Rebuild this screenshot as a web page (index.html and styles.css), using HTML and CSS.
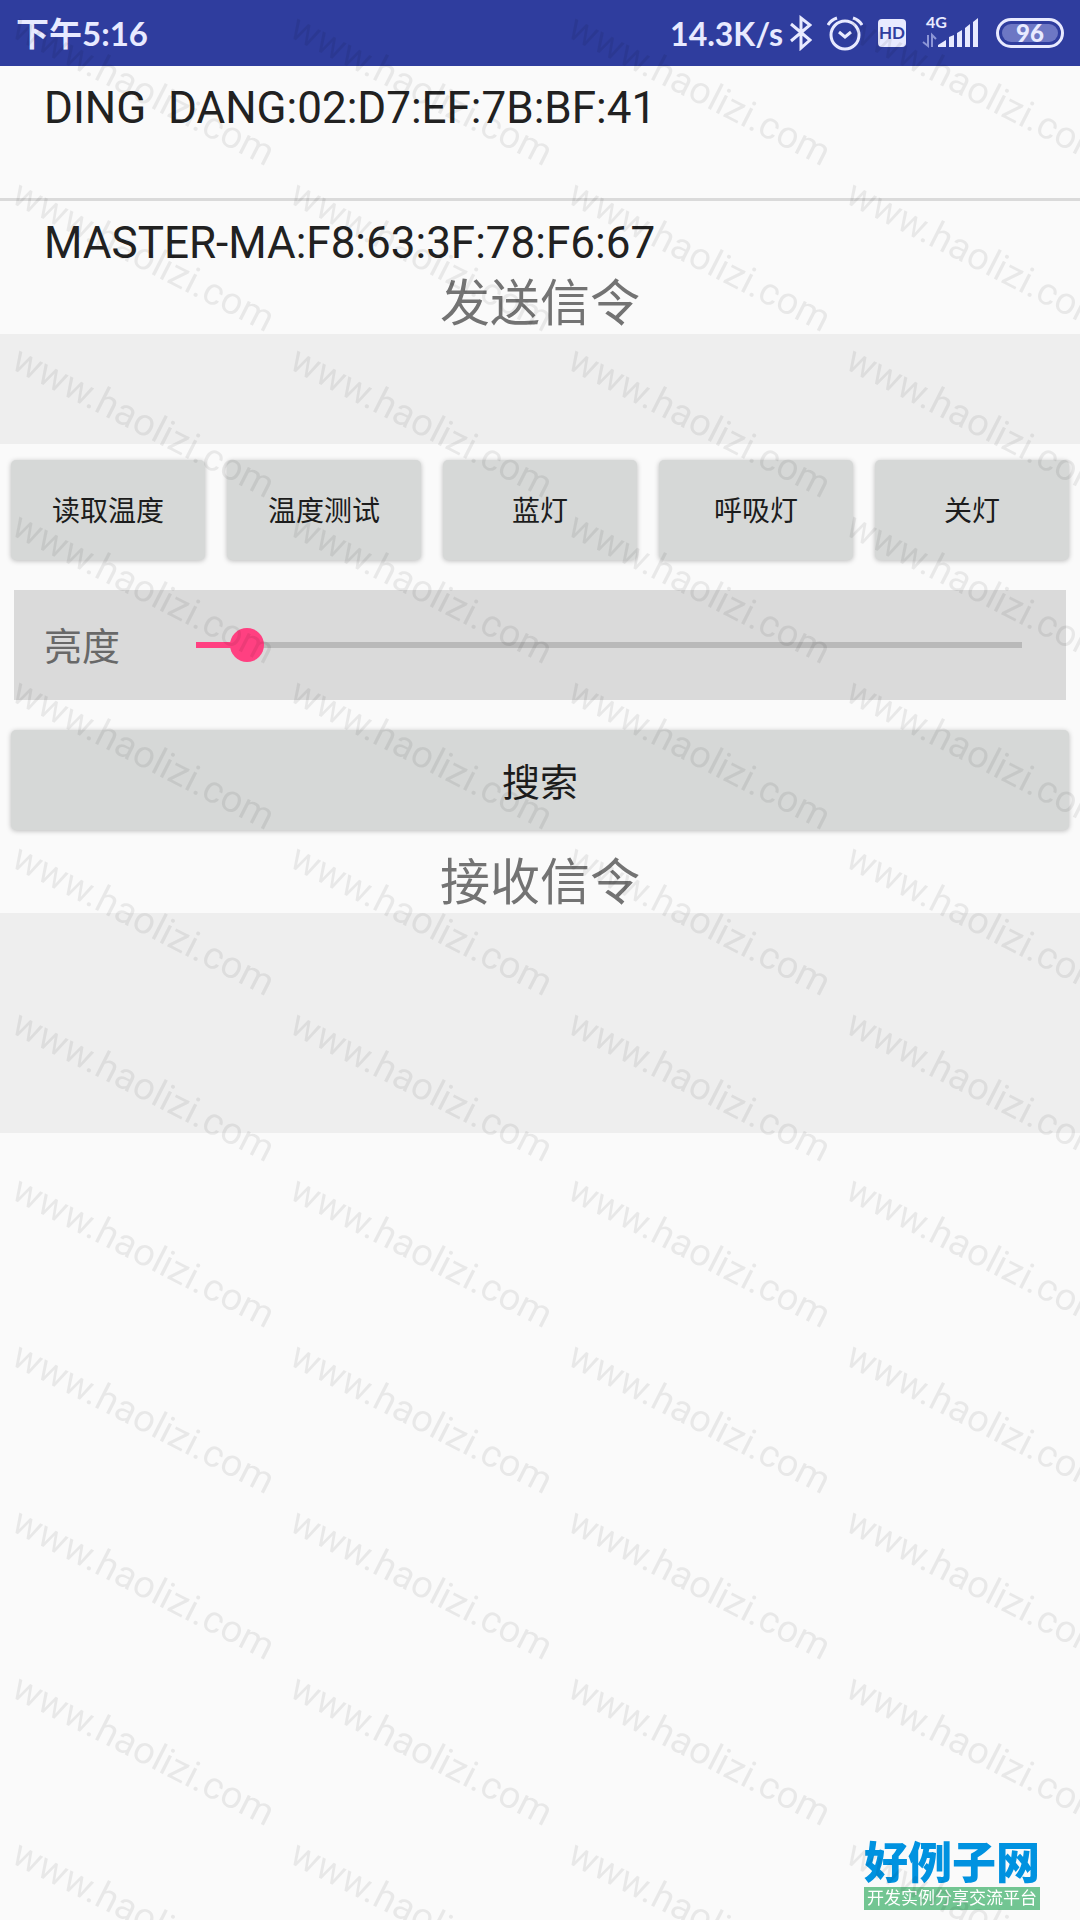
FILE: index.html
```html
<!DOCTYPE html>
<html lang="zh-CN">
  <head>
    <title>蓝牙调试</title>
    <meta charset="utf-8">
    <meta name="viewport" content="width=device-width, initial-scale=1">
    <link rel="stylesheet" href="styles.css">
  </head>
  <body>

  <header class="status">
    <span class="time">下午5:16</span>
    <div class="status-right">
      <span>14.3K/s</span>
      <svg class="bluetooth" width="22" height="36" viewBox="0 0 22 36">
        <path d="M1 9 L20 25 L11 33 V3 L20 10 L1 26"/>
      </svg>
      <svg class="alarm" width="36" height="36" viewBox="0 0 36 36">
        <circle cx="18" cy="20" r="14"/>
        <path d="M1 10 Q4 5 10 3 M35 10 Q32 5 26 3 M12 17 L18 22 L24 17"/>
      </svg>
      <span class="hd">HD</span>
      <svg class="signal" width="60" height="36" viewBox="0 0 60 36">
        <text x="5" y="13">4G</text>
        <path class="arrows" d="M7 20 V31 L2 27 M11 32 V20 L15 24"/>
        <path d="M17 32 V30 L25 25 V32Z M28 32 V22 L33 20 V32Z M36 32 V18 L41 15 V32Z M44 32 V13 L49 9 V32Z M52 32 V7 L57 3 V32Z"/>
      </svg>
      <span class="battery"><b>96</b></span>
    </div>
  </header>

  <main>
    <ul class="devices">
      <li>DING&nbsp; DANG:02:D7:EF:7B:BF:41</li>
      <li>MASTER-MA:F8:63:3F:78:F6:67</li>
    </ul>

    <h2>发送信令</h2>
    <div class="log"></div>

    <div class="buttons">
      <button type="button">读取温度</button>
      <button type="button">温度测试</button>
      <button type="button">蓝灯</button>
      <button type="button">呼吸灯</button>
      <button type="button">关灯</button>
    </div>

    <div class="brightness">
      <label for="light">亮度</label>
      <input type="range" id="light" min="0" max="255" value="11">
    </div>

    <div class="buttons">
      <button type="button" class="search">搜索</button>
    </div>

    <h2>接收信令</h2>
    <div class="log log-receive"></div>
  </main>

  <a class="logo" href="#">
    <strong>好例子网</strong>
    <span>开发实例分享交流平台</span>
  </a>

  <div class="watermark" id="watermark" aria-hidden="true"></div>

  <script>
    var watermark = document.getElementById('watermark');
    for (var i = 0; i < 48; i++) {
      var mark = document.createElement('span');
      mark.textContent = 'www.haolizi.com';
      watermark.appendChild(mark);
    }
  </script>

  </body>
</html>
```
FILE: styles.css
```css
* {
  box-sizing: border-box;
}
body {
  margin: 0;
  min-height: 100vh;
  background: #fafafa;
  color: #212121;
  font-family: Roboto, "Noto Sans CJK SC", sans-serif;
}

/* status bar */
.status {
  display: flex;
  align-items: center;
  justify-content: space-between;
  height: 66px;
  padding: 0 16px;
  background: #2f3d9e;
  color: #e8eaff;
  font: bold 32px Lato, "Noto Sans CJK SC", sans-serif;
}
.time {
  padding-bottom: 2px;
  font-size: 33px;
}
.status-right {
  display: flex;
  align-items: center;
  gap: 15px;
}
.status svg {
  fill: none;
  stroke: #e8eaff;
  stroke-width: 3;
}
.status .bluetooth {
  margin-left: -8px;
}
.hd {
  width: 28px;
  height: 28px;
  border-radius: 4px;
  background: #e8eaff;
  color: #2f3d9e;
  font-size: 17px;
  line-height: 28px;
  text-align: center;
}
.status .signal {
  fill: #e8eaff;
  stroke: none;
  font-size: 16px;
}
.status .signal .arrows {
  fill: none;
  stroke: #8c95d6;
  stroke-width: 2;
}
.battery {
  width: 68px;
  height: 30px;
  padding: 3px;
  border: 3px solid #e8eaff;
  border-radius: 15px;
  font-size: 24px;
  line-height: 18px;
  text-align: center;
}
.battery b {
  display: block;
  border-radius: 9px;
  background: #6d77c4;
}

/* device list */
.devices {
  height: 210px;
  margin: 0;
  padding: 0;
  overflow: hidden;
  list-style: none;
}
.devices li {
  height: 135px;
  padding: 16px 44px;
  border-bottom: 3px solid #dadada;
  font-size: 44px;
  line-height: 52px;
}
h2 {
  margin: 0;
  padding-bottom: 2px;
  color: #737373;
  font-size: 50px;
  font-weight: normal;
  line-height: 56px;
  text-align: center;
}
.log {
  height: 110px;
  background: #eee;
}
.log-receive {
  height: 220px;
}

.buttons {
  display: flex;
  gap: 22px;
  padding: 16px 11px 30px;
}
button {
  flex: 1;
  height: 100px;
  padding: 0 0 2px;
  border: 0;
  border-radius: 5px;
  background: #d6d8d7;
  box-shadow: 0 1px 5px rgba(0,0,0,0.25);
  color: #1c1c1c;
  font: 28px Roboto, "Noto Sans CJK SC", sans-serif;
}
.search {
  font-size: 38px;
}

.brightness {
  display: flex;
  align-items: center;
  height: 110px;
  margin: 0 14px;
  padding: 0 44px 0 30px;
  background: #dadada;
}
.brightness + .buttons {
  padding: 30px 11px 25px;
}
.brightness label {
  width: 152px;
  padding-bottom: 4px;
  color: #686868;
  font-size: 38px;
}
.brightness input {
  flex: 1;
  height: 34px;
  margin: 0;
  background: none;
  -webkit-appearance: none;
  appearance: none;
}
.brightness input::-webkit-slider-runnable-track {
  height: 6px;
  background: linear-gradient(to right, #ff4081 5%, #b9b9b9 5%);
}
.brightness input::-webkit-slider-thumb {
  width: 34px;
  height: 34px;
  margin-top: -14px;
  border-radius: 50%;
  background: #ff4081;
  -webkit-appearance: none;
}

/* site logo in the corner */
.logo {
  position: fixed;
  right: 40px;
  bottom: 10px;
  color: #0092e0;
  text-align: center;
  text-decoration: none;
}
.logo strong {
  display: block;
  font-size: 44px;
  font-weight: 900;
  line-height: 46px;
}
.logo span {
  display: block;
  background: #72c592;
  color: #fff;
  font-size: 17px;
  line-height: 23px;
}

.watermark {
  display: grid;
  grid-template-columns: repeat(4, 278px);
  grid-auto-rows: 166px;
  position: fixed;
  top: 0;
  right: 0;
  bottom: 0;
  left: 0;
  overflow: hidden;
  color: rgba(0,0,0,0.07);
  font-size: 38px;
  line-height: 40px;
  pointer-events: none;
}
.watermark span {
  padding: 3px 0 0 10px;
  transform: rotate(27deg);
  transform-origin: 10px 35px;
}
```
